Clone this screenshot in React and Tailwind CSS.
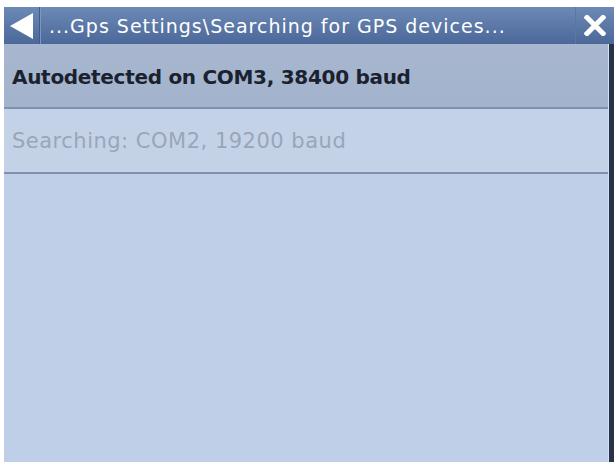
import React from 'react';

const font = { fontFamily: '"DejaVu Sans", "Liberation Sans", sans-serif' };

function BackArrow() {
    return (
        <svg width="24" height="26" viewBox="0 0 24 26" className="shrink-0">
            <polygon points="0,13 23,0 23,26" fill="#ffffff" />
        </svg>
    );
}

function CloseIcon() {
    return (
        <svg width="22" height="21" viewBox="0 0 22 21" className="shrink-0">
            <path d="M3 2.5 L19 18.5 M19 2.5 L3 18.5" stroke="#ffffff" strokeWidth="5" strokeLinecap="square" />
        </svg>
    );
}

export default function App() {
    return (
        <div className="w-[614px] h-[465px] bg-white pt-[7px] pl-[4px] pb-[3px] flex flex-col" style={font}>
            <div className="h-[37px] flex items-center bg-gradient-to-b from-[#6d89b6] to-[#4b6899]">
                <div className="w-[36px] h-full flex items-center pl-[6px] border-r border-r-[#3f5b8a]">
                    <BackArrow />
                </div>
                <div className="flex-1 h-full flex items-center pl-[8px] pt-[2px] border-l border-l-[#7c96c0] text-white text-[19px] tracking-[1px] whitespace-nowrap overflow-hidden">
                    ...Gps Settings\Searching for GPS devices...
                </div>
                <div className="w-[39px] h-full flex items-center justify-center border-l border-l-[#5b77a6]">
                    <CloseIcon />
                </div>
            </div>
            <div className="flex-1 flex">
                <div className="flex-1 flex flex-col bg-[#bfcfe7]">
                    <div className="h-[65px] flex items-center pl-[8px] pt-[3px] bg-gradient-to-b from-[#a8b7cf] to-[#a3b3cd] border-b-2 border-b-[#7f91ae] text-[20px] font-bold tracking-[-0.3px] text-[#1a2230] whitespace-nowrap">
                        Autodetected on COM3, 38400 baud
                    </div>
                    <div className="h-[65px] flex items-center pl-[8px] pt-[3px] bg-[#c4d2e8] border-b-2 border-b-[#7f91ae] text-[21px] tracking-[0.5px] text-[#9aa6b8] whitespace-nowrap">
                        Searching: COM2, 19200 baud
                    </div>
                    <div className="flex-1" />
                </div>
                <div className="w-[6px] bg-[#27324b] border-l border-l-[#d7e0ee]" />
            </div>
        </div>
    );
}
